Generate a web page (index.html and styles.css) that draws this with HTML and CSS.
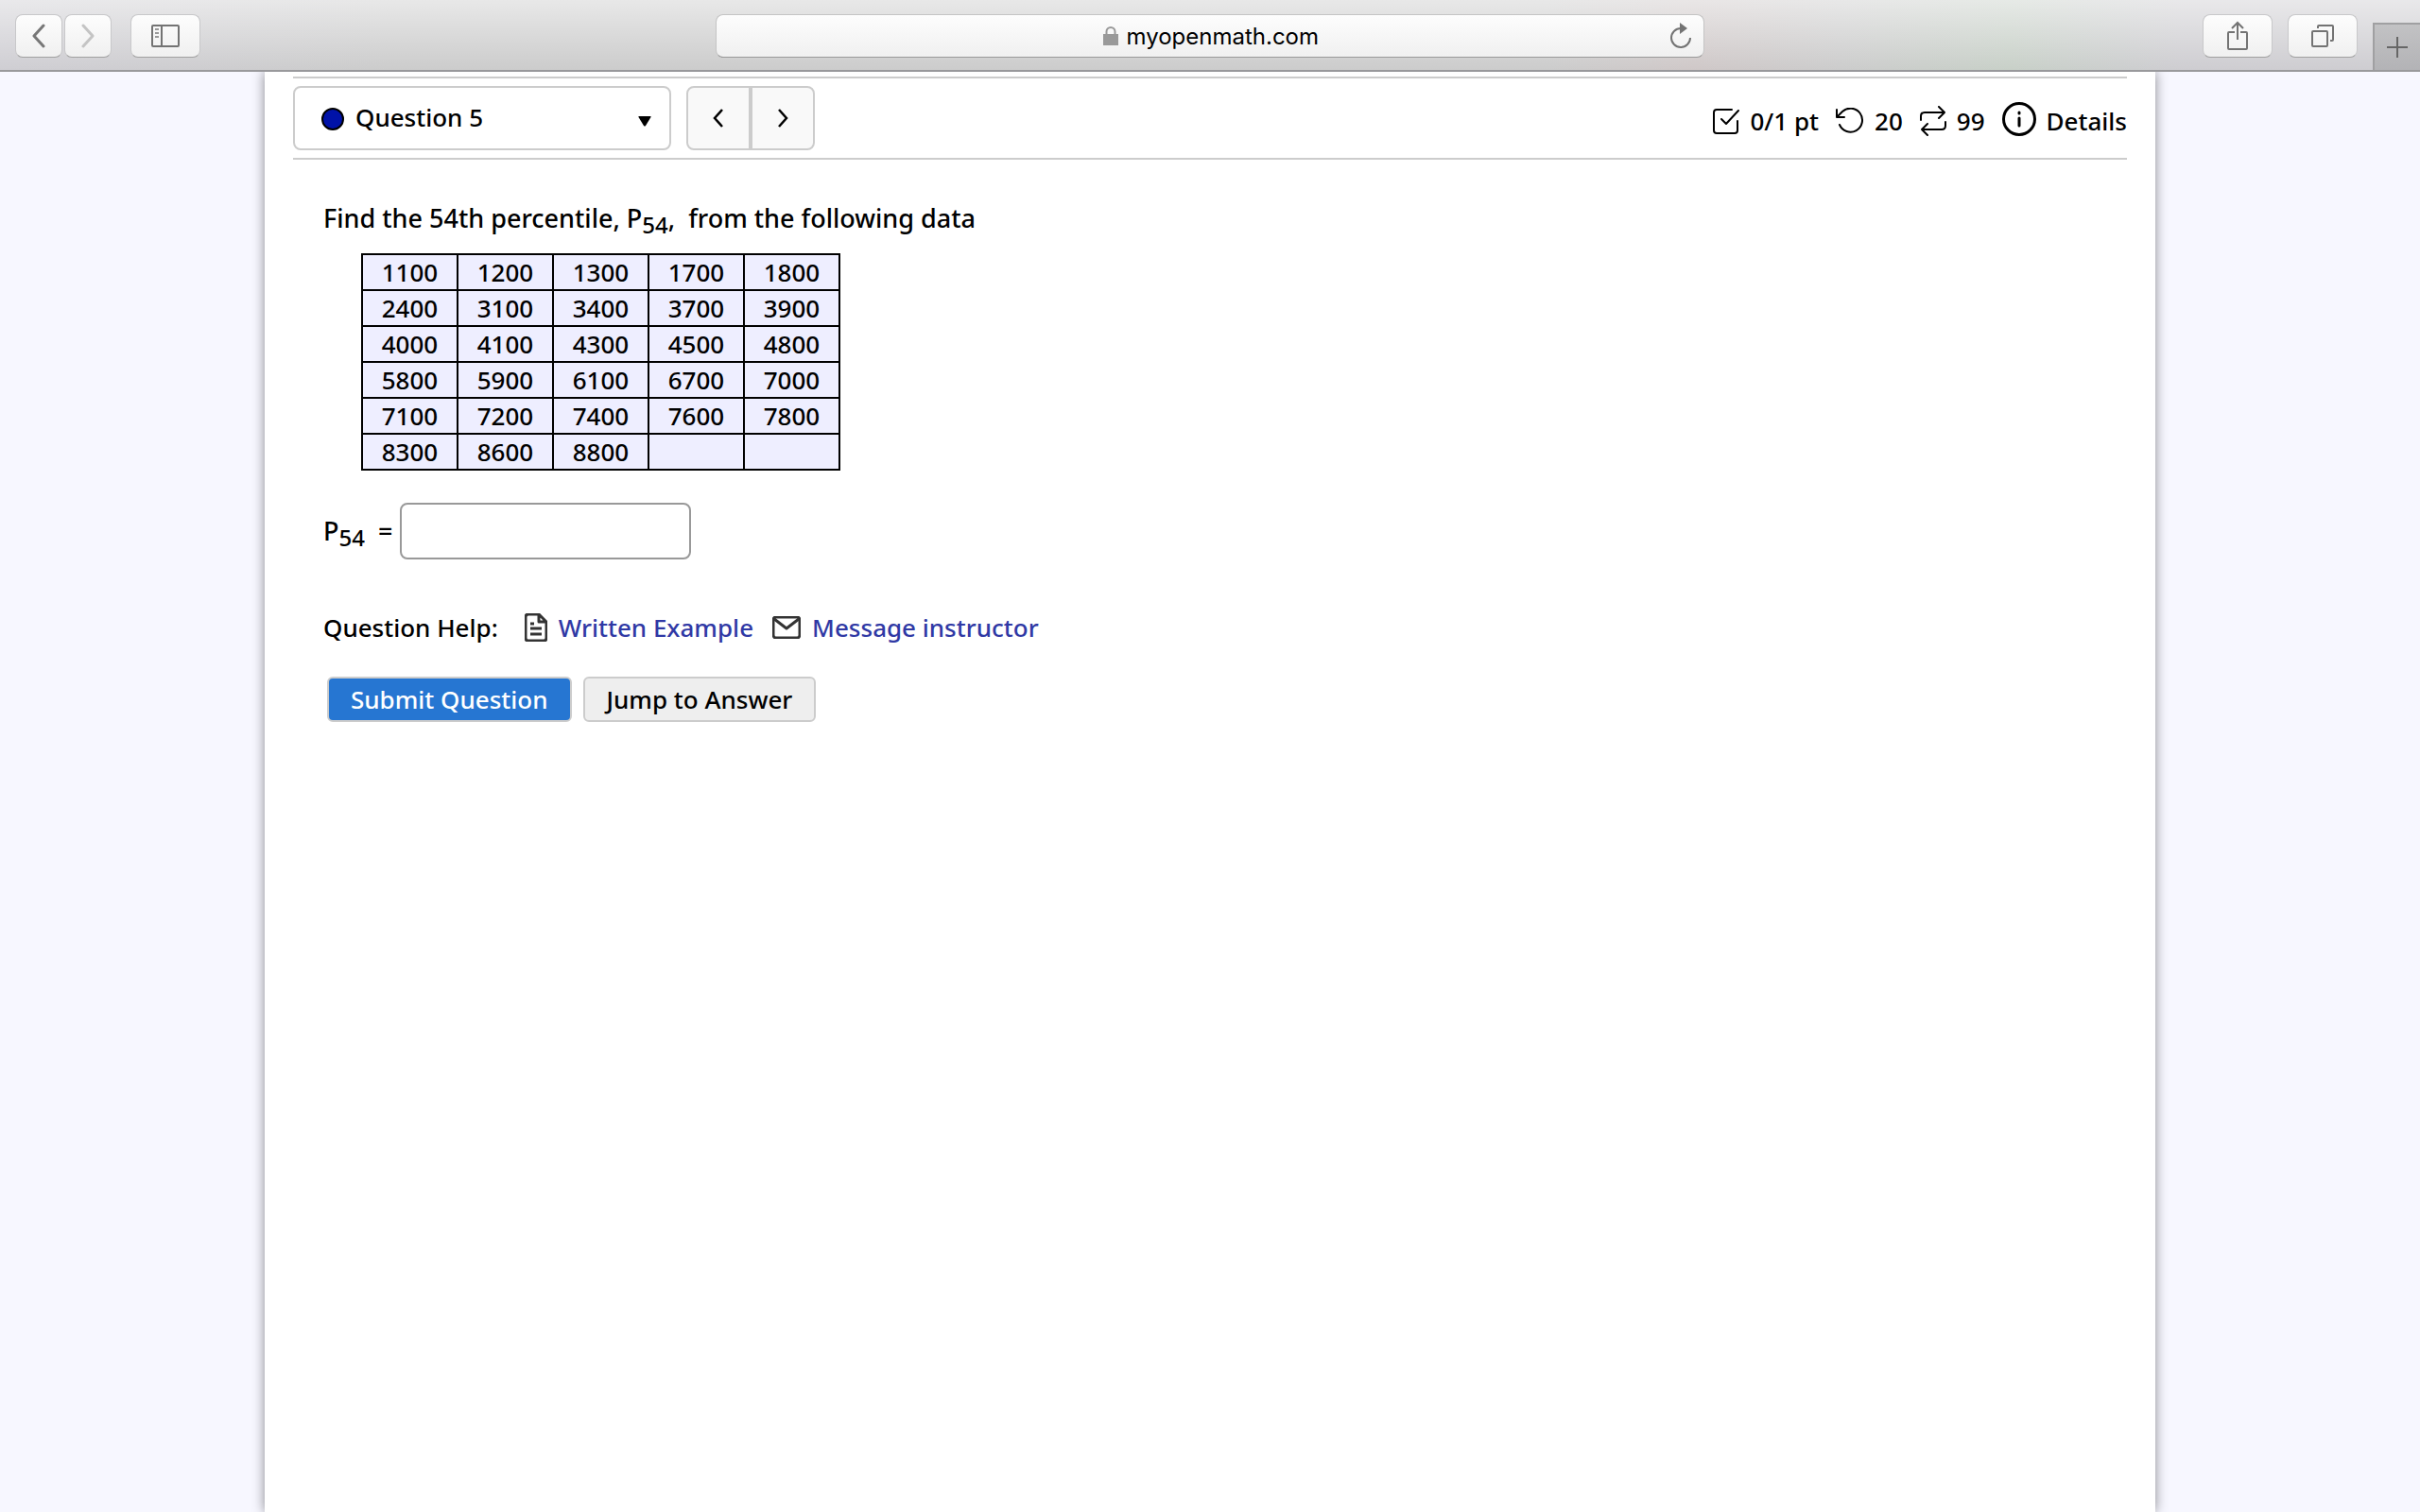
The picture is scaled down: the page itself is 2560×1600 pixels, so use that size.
FILE: index.html
```
<!DOCTYPE html>
<html lang="en">
<head>
    <meta charset="UTF-8">
    <meta name="viewport" content="width=device-width, initial-scale=1.0">
    <title>Question 5</title>
    <link rel="stylesheet" href="styles.css">
</head>
<body>
    <header class="toolbar">
        <div class="tools">
            <div class="nav-pair">
                <button class="tool small" aria-label="Back">
                    <svg width="16" height="26" viewBox="0 0 16 26"><path d="M13 2 L3 13 L13 24" fill="none" stroke="#777" stroke-width="3" stroke-linecap="round" stroke-linejoin="round"/></svg>
                </button>
                <button class="tool small" aria-label="Forward">
                    <svg width="16" height="26" viewBox="0 0 16 26"><path d="M3 2 L13 13 L3 24" fill="none" stroke="#c4c4c4" stroke-width="3" stroke-linecap="round" stroke-linejoin="round"/></svg>
                </button>
            </div>
            <button class="tool" aria-label="Sidebar">
                <svg width="30" height="24" viewBox="0 0 30 24" fill="none" stroke="#737373" stroke-width="2"><rect x="1" y="1" width="28" height="22" rx="1"/><path d="M11 1 V23"/><path d="M4 5 H8 M4 9 H8 M4 13 H8" stroke="#999"/></svg>
            </button>
        </div>
        <div class="address">
            <span class="site">
                <svg width="16" height="20" viewBox="0 0 16 20"><path d="M3.500 9 V5.500 A4.500 4.500 0 0 1 12.500 5.500 V9" fill="none" stroke="#999" stroke-width="2"/><rect y="8" width="16" height="12" fill="#999"/></svg>
                <input class="url" type="text" value="myopenmath.com" aria-label="Address">
            </span>
            <button class="reload" aria-label="Reload">
                <svg width="24" height="28" viewBox="0 0 24 28"><path d="M12 6 A10 10 0 1 0 22 16" fill="none" stroke="#737373" stroke-width="2"/><path d="M11 0 L19 6 L11 12 Z" fill="#737373"/></svg>
            </button>
        </div>
        <div class="tools right">
            <button class="tool" aria-label="Share">
                <svg width="24" height="32" viewBox="0 0 24 32" fill="none" stroke="#737373" stroke-width="2"><path d="M9 12 H3 Q2 12 2 13 V29 Q2 30 3 30 H21 Q22 30 22 29 V13 Q22 12 21 12 H15"/><path d="M12 20 V2 M6 8 L12 2 L18 8"/></svg>
            </button>
            <button class="tool" aria-label="Show all tabs">
                <svg width="24" height="24" viewBox="0 0 24 24" fill="none" stroke="#737373" stroke-width="2"><rect x="1" y="7" width="16" height="16" rx="1"/><path d="M7 4 V2 Q7 1 8 1 H22 Q23 1 23 2 V16 Q23 17 22 17 H20"/></svg>
            </button>
            <button class="new-tab" aria-label="New tab">
                <svg width="22" height="22" viewBox="0 0 22 22"><path d="M11 0 V22 M0 11 H22" stroke="#666" stroke-width="2"/></svg>
            </button>
        </div>
    </header>

    <main class="page">
        <div class="question-bar">
            <div class="picker">
                <svg class="dot" width="24" height="24" viewBox="0 0 24 24"><circle cx="12" cy="12" r="11" fill="#0012a8" stroke="#000" stroke-width="2"/></svg>
                <select class="question-select" aria-label="Select question">
                    <option>Question 5</option>
                </select>
                <svg class="arrow" width="14" height="12" viewBox="0 0 14 12"><path d="M1 1 H13 Q14 1 13.500 2 L8 11 Q7 12 6 11 L0.500 2 Q0 1 1 1 Z"/></svg>
            </div>
            <div class="steps">
                <button class="step" aria-label="Previous question">
                    <svg width="12" height="22" viewBox="0 0 12 22"><path d="M10 2 L2 11 L10 20" fill="none" stroke="#000" stroke-width="2.500"/></svg>
                </button>
                <button class="step" aria-label="Next question">
                    <svg width="12" height="22" viewBox="0 0 12 22"><path d="M2 2 L10 11 L2 20" fill="none" stroke="#000" stroke-width="2.500"/></svg>
                </button>
            </div>
            <div class="status">
                <span class="stat">
                    <svg width="28" height="28" viewBox="0 0 28 28"><path d="M20 2 H4 Q1 2 1 5 V24 Q1 27 4 27 H23 Q26 27 26 24 V14 M9 12 L14 17 L27 3"/></svg>
                    0/1 pt
                </span>
                <span class="stat">
                    <svg width="30" height="28" viewBox="0 0 30 28"><path d="M1 2 V10 H9 M1 10 L7 4 A12.500 12.500 0 1 1 4 18"/></svg>
                    20
                </span>
                <span class="stat">
                    <svg width="28" height="32" viewBox="0 0 28 32"><path d="M1 15 V11 Q1 7 5 7 H26 M20 1 L26 7 L20 13 M27 17 V21 Q27 25 23 25 H2 M8 19 L2 25 L8 31"/></svg>
                    99
                </span>
                <a class="stat" href="#">
                    <svg class="info" width="36" height="36" viewBox="0 0 36 36"><circle cx="18" cy="18" r="16.500"/><path d="M18 17 V25 M18 11 V12"/></svg>
                    Details
                </a>
            </div>
        </div>

        <div class="question">
            <p class="prompt">Find the 54th percentile, P<sub>54</sub>,&nbsp; from the following data</p>
            <table class="data">
                <tbody>
                    <tr><td>1100</td><td>1200</td><td>1300</td><td>1700</td><td>1800</td></tr>
                    <tr><td>2400</td><td>3100</td><td>3400</td><td>3700</td><td>3900</td></tr>
                    <tr><td>4000</td><td>4100</td><td>4300</td><td>4500</td><td>4800</td></tr>
                    <tr><td>5800</td><td>5900</td><td>6100</td><td>6700</td><td>7000</td></tr>
                    <tr><td>7100</td><td>7200</td><td>7400</td><td>7600</td><td>7800</td></tr>
                    <tr><td>8300</td><td>8600</td><td>8800</td><td></td><td></td></tr>
                </tbody>
            </table>
            <div class="answer">
                <label for="answer">P<sub>54</sub>&nbsp; =</label>
                <input class="answer-box" type="text" id="answer">
            </div>
            <div class="help">
                <span>Question Help:</span>
                <a class="help-link written" href="#">
                    <svg width="24" height="30" viewBox="0 0 24 30"><path d="M15 1 H4 Q1 1 1 4 V26 Q1 29 4 29 H20 Q23 29 23 26 V9 Z M15 1 V9 H23 M6 11 H10 M6 16 H18 M6 22 H18"/></svg>
                    <span>Written Example</span>
                </a>
                <a class="help-link" href="#">
                    <svg width="30" height="24" viewBox="0 0 30 24"><rect x="1" y="1" width="28" height="22" rx="3"/><path d="M2 3 L15 13 L28 3"/></svg>
                    <span>Message instructor</span>
                </a>
            </div>
            <div class="actions">
                <button class="btn primary">Submit Question</button>
                <button class="btn">Jump to Answer</button>
            </div>
        </div>
    </main>
</body>
</html>
```
FILE: styles.css
```
* {
    box-sizing: border-box;
}
body {
    margin: 0;
    min-height: 100vh;
    display: flex;
    flex-direction: column;
    background-color: #f7f7ff;
    color: #000;
    font-family: "Noto Sans", "Open Sans", sans-serif;
    font-size: 27px;
    font-weight: 500;
    line-height: 36px;
}
button, input, select {
    font-family: inherit;
    font-size: 26px;
    font-weight: inherit;
    color: inherit;
}
button {
    padding: 0;
    cursor: pointer;
}
svg {
    display: block;
    flex: none;
}

/* browser toolbar */
.toolbar {
    display: grid;
    grid-template-columns: 1fr minmax(0, 1046px) 1fr;
    height: 76px;
    padding-top: 2px;
    border-bottom: 2px solid #99999c;
    background:
        linear-gradient(rgba(255, 255, 255, 0.55), rgba(255, 255, 255, 0)),
        linear-gradient(90deg, #cfced3 0, #cccccc 16%, #cccccc 64%, #cfc8c8 70%, #cccccc 76%, #c8d0c8 83%, #cecdd1 90%, #cecdd1 100%);
    position: relative;
    z-index: 1;
}
.tools {
    display: flex;
    align-items: center;
    gap: 20px;
    padding-left: 16px;
}
.right {
    justify-content: flex-end;
    gap: 16px;
    padding-left: 0;
}
.nav-pair {
    display: flex;
    gap: 2px;
}
.tool {
    display: flex;
    align-items: center;
    justify-content: center;
    width: 74px;
    height: 46px;
    border: 1px solid #c8c8ca;
    border-bottom-color: #a0a0a0;
    border-radius: 8px;
    background: linear-gradient(#fdfdfd, #f0f0f0);
}
.small {
    width: 50px;
}
.address {
    display: flex;
    align-items: center;
    align-self: center;
    height: 46px;
    padding-right: 12px;
    border: 1px solid #c4c4c4;
    border-bottom-color: #999;
    border-radius: 8px;
    background: linear-gradient(#fdfdfd, #f0f0f0);
}
.site {
    display: flex;
    align-items: center;
    justify-content: center;
    gap: 9px;
    flex: 1;
    padding-left: 36px;
}
.url {
    width: 202px;
    padding: 0;
    border: none;
    background: none;
    font-family: Inter, sans-serif;
    font-size: 24px;
    font-weight: 400;
}
.reload {
    border: none;
    background: none;
}
.new-tab {
    display: flex;
    align-items: center;
    justify-content: center;
    align-self: flex-end;
    width: 50px;
    height: 50px;
    border: solid #a0a0a2;
    border-width: 2px 0 0 2px;
    background: linear-gradient(#c2c2c4, #b3b3b6);
}

/* page */
.page {
    flex: 1;
    width: 100%;
    max-width: 2000px;
    margin: 0 auto;
    padding: 5px 30px 0;
    background: white;
    box-shadow: 0 0 12px rgba(0, 0, 0, 0.45);
}
.question-bar {
    display: flex;
    align-items: center;
    padding: 8px 0;
    border-top: 2px solid #ccc;
    border-bottom: 2px solid #ccc;
}
.picker {
    position: relative;
    width: 400px;
    margin-right: 16px;
}
.question-select {
    display: block;
    width: 100%;
    height: 68px;
    padding: 0 64px 2px;
    border: 2px solid #ccc;
    border-radius: 8px;
    background: white;
    appearance: none;
}
.dot {
    position: absolute;
    left: 30px;
    top: 23px;
}
.arrow {
    position: absolute;
    right: 21px;
    top: 31px;
}
.steps {
    display: flex;
}
.step {
    display: flex;
    align-items: center;
    justify-content: center;
    width: 68px;
    height: 68px;
    border: 2px solid #ccc;
    border-radius: 8px 0 0 8px;
    background: #f9f9f9;
}
.step + .step {
    border-radius: 0 8px 8px 0;
}
.status {
    display: flex;
    align-items: center;
    gap: 18px;
    margin-left: auto;
    padding-top: 6px;
    font-size: 26px;
}
.stat {
    display: flex;
    align-items: center;
    gap: 11px;
    color: #000;
    text-decoration: none;
}
.stat svg {
    fill: none;
    stroke: #000;
    stroke-width: 2;
    stroke-linecap: round;
    stroke-linejoin: round;
}
.stat .info {
    margin-bottom: 4px;
    stroke-width: 3;
}

.question {
    padding: 44px 32px;
}
.prompt {
    margin: 0 0 19px;
}
sub {
    font-size: 24px;
    line-height: 0;
    vertical-align: -6px;
}
.data {
    margin-left: 40px;
    border-collapse: collapse;
    font-size: 26px;
}
.data td {
    width: 101px;
    height: 38px;
    padding: 0;
    border: 2px solid #000;
    background: #eeeeff;
    text-align: center;
    line-height: 36px;
}
.answer {
    display: flex;
    align-items: center;
    gap: 8px;
    margin-top: 34px;
}
.answer-box {
    width: 308px;
    height: 60px;
    padding: 0 12px;
    border: 2px solid #999;
    border-radius: 8px;
    background: white;
}
.help {
    display: flex;
    align-items: center;
    gap: 20px;
    margin-top: 54px;
    font-size: 26px;
}
.help-link {
    display: flex;
    align-items: center;
    gap: 12px;
    color: #3039a5;
    text-decoration: none;
}
.written {
    margin-left: 8px;
}
.help-link svg {
    fill: none;
    stroke: #333;
    stroke-width: 3;
    stroke-linejoin: round;
}
.actions {
    display: flex;
    gap: 12px;
    margin: 34px 0 0 4px;
}
.btn {
    height: 48px;
    padding: 0 23px;
    border: 2px solid #ccc;
    border-radius: 6px;
    background: #eee;
}
.primary {
    background: #2676d2;
    color: white;
}
```
